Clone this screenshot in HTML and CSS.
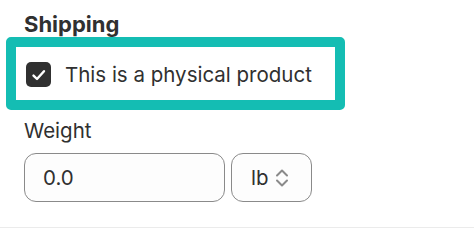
FILE: index.html
```html
<!DOCTYPE html>
<html>
<head>
<meta charset="utf-8">
<link rel="stylesheet" href="styles.css">
</head>
<body>
<div class="card">
  <h2 class="title">Shipping</h2>
  <label class="check-row">
    <span class="checkbox">
      <svg width="24" height="24" viewBox="0 0 24 24"><path d="M6.5 12.6 L10 16 L17 8.2" fill="none" stroke="#fff" stroke-width="2.4" stroke-linecap="round" stroke-linejoin="round"/></svg>
    </span>
    <span class="check-label">This is a physical product</span>
  </label>
  <div class="field-label">Weight</div>
  <div class="weight-row">
    <div class="input">0.0</div>
    <div class="select">
      <span>lb</span>
      <svg class="chev" width="14" height="20" viewBox="0 0 14 20"><path d="M2 7.5 L7 2.5 L12 7.5 M2 12.5 L7 17.5 L12 12.5" fill="none" stroke="#8a8a8a" stroke-width="2" stroke-linecap="round" stroke-linejoin="round"/></svg>
    </div>
  </div>
</div>
</body>
</html>
```
FILE: styles.css
```css
html, body {
  margin: 0;
  padding: 0;
  background: #ffffff;
}
body {
  font-family: Inter, "Noto Sans", sans-serif;
  color: #303030;
}
.card {
  height: 228px;
  box-sizing: border-box;
  padding: 12px 24px 0 24px;
  border-bottom: 1px solid #ebebeb;
}
.title {
  margin: 0;
  font-size: 22px;
  line-height: 24px;
  font-weight: 650;
}
.check-row {
  display: flex;
  align-items: center;
  box-sizing: border-box;
  width: 339px;
  height: 73px;
  margin: 1px 0 0 -18px;
  padding: 2px 0 0 10px;
  border: 10px solid #14bdb3;
  border-radius: 5px;
}
.checkbox {
  width: 25px;
  height: 25px;
  border-radius: 5px;
  background: #303030;
  display: flex;
  align-items: center;
  justify-content: center;
}
.check-label {
  margin-left: 14px;
  font-size: 20.5px;
}
.field-label {
  margin-top: 9px;
  font-size: 20.5px;
  line-height: 24px;
}
.weight-row {
  display: flex;
  gap: 6px;
  margin-top: 10px;
}
.input, .select {
  box-sizing: border-box;
  height: 49px;
  border: 1px solid #8a8a8a;
  border-radius: 12px;
  background: #fdfdfd;
  display: flex;
  align-items: center;
  font-size: 20.5px;
}
.input {
  width: 201px;
  padding-left: 18px;
}
.select {
  width: 81px;
  padding-left: 19px;
}
.chev {
  margin-left: 6px;
}
```
